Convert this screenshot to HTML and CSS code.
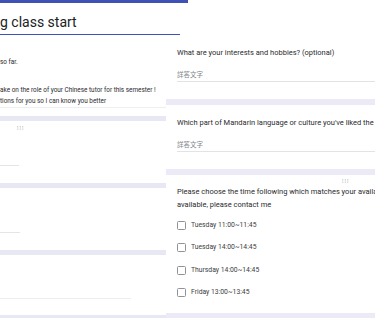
FILE: index.html
```html
<!DOCTYPE html>
<html lang="en">
<head>
<meta charset="utf-8">
<title>Form collage</title>
<link rel="stylesheet" href="styles.css">
</head>
<body>
<div class="page">
  <div class="col-left">
    <div class="hdr">
      <div class="hdr-bar"></div>
      <h1 class="hdr-title">g class start</h1>
      <div class="hdr-desc">
        <p class="desc-p desc-first">so far.</p>
        <p class="desc-p desc-second">ake on the role of your Chinese tutor for this semester !<br>tions for you so I can know you better</p>
      </div>
    </div>
    <div class="lstrip"></div>
    <div class="lcard lcard-a">
      <div class="handle handle-left">
        <svg width="7" height="4" viewBox="0 0 7 4"><g fill="#a9adb1"><circle cx="0.8" cy="0.8" r="0.6"/><circle cx="3.3" cy="0.8" r="0.6"/><circle cx="5.8" cy="0.8" r="0.6"/><circle cx="0.8" cy="3" r="0.6"/><circle cx="3.3" cy="3" r="0.6"/><circle cx="5.8" cy="3" r="0.6"/></g></svg>
      </div>
      <div class="lline lline-a"></div>
    </div>
    <div class="lstrip"></div>
    <div class="lcard lcard-b"><div class="lline lline-b"></div></div>
    <div class="lstrip"></div>
    <div class="lcard lcard-c"><div class="lline lline-c"></div></div>
    <div class="lstrip"></div>
  </div>

  <div class="col-right">
    <div class="form">
      <section class="rcard">
        <div class="q">What are your interests and hobbies? (optional)</div>
        <div class="ans">詳答文字</div>
      </section>
      <div class="rstrip"></div>
      <section class="rcard">
        <div class="q">Which part of Mandarin language or culture you've liked the most so far?</div>
        <div class="ans">詳答文字</div>
      </section>
      <div class="rstrip"></div>
      <section class="rcard rcard-choice">
        <div class="handle handle-right">
          <svg width="7" height="4" viewBox="0 0 7 4"><g fill="#a9adb1"><circle cx="0.8" cy="0.8" r="0.6"/><circle cx="3.3" cy="0.8" r="0.6"/><circle cx="5.8" cy="0.8" r="0.6"/><circle cx="0.8" cy="3" r="0.6"/><circle cx="3.3" cy="3" r="0.6"/><circle cx="5.8" cy="3" r="0.6"/></g></svg>
        </div>
        <div class="q q-two">Please choose the time following which matches your availability. If none of them is<br>available, please contact me</div>
        <div class="opts">
          <div class="opt"><span class="cb"></span><span class="opt-text">Tuesday 11:00~11:45</span></div>
          <div class="opt"><span class="cb"></span><span class="opt-text">Tuesday 14:00~14:45</span></div>
          <div class="opt"><span class="cb"></span><span class="opt-text">Thursday 14:00~14:45</span></div>
          <div class="opt"><span class="cb"></span><span class="opt-text">Friday 13:00~13:45</span></div>
        </div>
      </section>
      <div class="rstrip rstrip-last"></div>
    </div>
  </div>
</div>
</body>
</html>
```

FILE: styles.css
```css
html, body {
  margin: 0;
  padding: 0;
  background: #ffffff;
}

body {
  font-family: Roboto, "Liberation Sans", Arial, sans-serif;
  color: #202124;
}

.page {
  display: flex;
  width: 375px;
  height: 318px;
  overflow: hidden;
}

/* ---------- left form ---------- */
.col-left {
  width: 166px;
  flex: none;
}

.hdr {
  background: #ffffff;
  padding-bottom: 8.5px;
}

.hdr-bar {
  width: 188px;
  height: 3px;
  background: #3f51b5;
}

.hdr-title {
  width: 180px;
  margin: 11px 0 0;
  padding-bottom: 4px;
  border-bottom: 1px solid #3f51b5;
  font-size: 14px;
  font-weight: 400;
  line-height: 16px;
  color: #202124;
  white-space: nowrap;
}

.hdr-desc {
  border-bottom: 1px solid #eeeff1;
}

.desc-p {
  margin: 0;
  font-size: 6.4px;
  line-height: 11px;
  color: #2a2b2e;
  white-space: nowrap;
}

.desc-first {
  margin-top: 21.5px;
}

.desc-second {
  margin-top: 17px;
}

.lstrip {
  height: 5px;
  background: #e8e8f5;
}

.lcard {
  background: #ffffff;
}

.lcard-a {
  padding-bottom: 17px;
}

.lcard-b {
  padding: 44px 0 17px;
}

.lcard-c {
  padding: 43px 0 16px;
}

.handle {
  display: flex;
  align-items: center;
}

.handle-left {
  height: 14px;
  padding-left: 17px;
}

.lline {
  height: 0;
  border-top: 1px solid #e4e5e7;
}

.lline-a {
  width: 19px;
  margin-top: 30px;
}

.lline-b {
  width: 20px;
}

.lline-c {
  width: 131px;
  border-top-color: #eceef0;
}

/* ---------- right form ---------- */
.col-right {
  flex: 1;
  min-width: 0;
  overflow: hidden;
  padding-top: 35px;
}

.form {
  width: 358px;
}

.rcard {
  background: #ffffff;
  padding: 12px 11px 17px;
}

.q {
  font-size: 7.5px;
  line-height: 12px;
  color: #2a2b2e;
  white-space: nowrap;
}

.q-two {
  line-height: 12.5px;
}

.ans {
  margin-top: 10px;
  padding-bottom: 2px;
  border-bottom: 1px solid #e2e3e5;
  font-family: "Noto Sans CJK TC", "Noto Sans CJK SC", sans-serif;
  font-size: 6.5px;
  line-height: 10px;
  color: #80868b;
}

.rstrip {
  height: 6px;
  background: #ebeaf6;
}

.rstrip-last {
  height: 10px;
}

.rcard-choice {
  padding-top: 0;
  padding-bottom: 16px;
}

.handle-right {
  height: 11px;
  justify-content: center;
}

.opts {
  display: flex;
  flex-direction: column;
  gap: 13.5px;
  margin-top: 9.5px;
}

.opt {
  display: flex;
  align-items: center;
  gap: 5px;
  height: 9px;
}

.cb {
  width: 9px;
  height: 9px;
  box-sizing: border-box;
  border: 1px solid #8f9397;
  border-radius: 1.5px;
  flex: none;
}

.opt-text {
  font-size: 6.8px;
  line-height: 9px;
  color: #3c4043;
  white-space: nowrap;
}
```
